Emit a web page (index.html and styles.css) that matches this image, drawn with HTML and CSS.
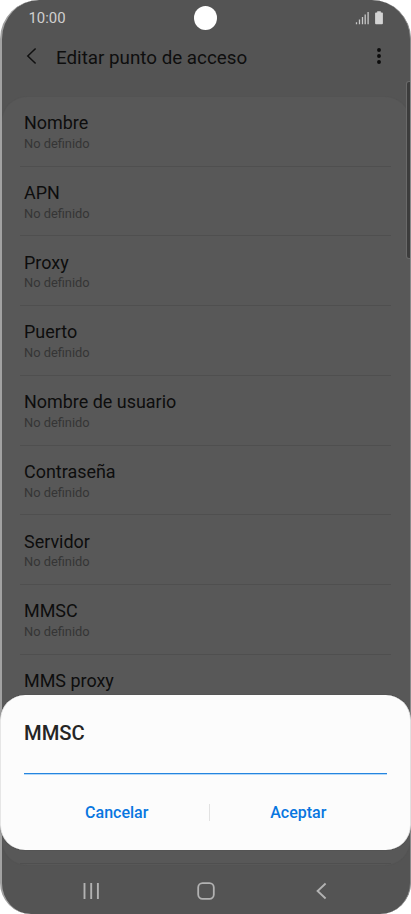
FILE: index.html
```html
<!DOCTYPE html>
<html lang="es">
<head>
<meta charset="utf-8">
<title>Editar punto de acceso</title>
<link rel="stylesheet" href="styles.css">
</head>
<body>
<main class="phone">
  <div class="status">
    <span class="clock">10:00</span>
    <svg class="status-icons" width="30" height="16" viewBox="0 0 30 16">
      <path d="M1.500 12.300v1.900M4.500 9.500v4.700M7.500 7v7.200M10.200 4.500v9.700M13.100 2v12.200" stroke="#c8c8c8" stroke-width="1.300"/>
      <path d="M22.200 1.200h3.600v1.200h1.200q.9 0 .9.900v10q0 .9-.9.900h-6q-.9 0-.9-.9V3.300q0-.9.9-.9h1.200z" fill="#d4d4d4"/>
    </svg>
    <span class="camera"></span>
  </div>
  <header class="header">
    <svg class="back" width="12" height="18" viewBox="0 0 12 18"><path d="M9.600 1.500 1.800 9l7.800 7.500" fill="none" stroke="#101010" stroke-width="1.500"/></svg>
    <h1 class="title">Editar punto de acceso</h1>
    <svg class="more" width="6" height="18" viewBox="0 0 6 18" fill="#0c0c0c"><circle cx="3" cy="3" r="1.950"/><circle cx="3" cy="9" r="1.950"/><circle cx="3" cy="15" r="1.950"/></svg>
  </header>
  <section class="list">
    <div class="row"><div class="name">Nombre</div><div class="value">No definido</div></div>
    <div class="row"><div class="name">APN</div><div class="value">No definido</div></div>
    <div class="row"><div class="name">Proxy</div><div class="value">No definido</div></div>
    <div class="row"><div class="name">Puerto</div><div class="value">No definido</div></div>
    <div class="row"><div class="name">Nombre de usuario</div><div class="value">No definido</div></div>
    <div class="row"><div class="name">Contraseña</div><div class="value">No definido</div></div>
    <div class="row"><div class="name">Servidor</div><div class="value">No definido</div></div>
    <div class="row"><div class="name">MMSC</div><div class="value">No definido</div></div>
    <div class="row"><div class="name">MMS proxy</div></div>
    <div class="row"></div>
    <div class="row"></div>
  </section>
  <nav class="nav">
    <svg width="18" height="18" viewBox="0 0 18 18"><path d="M2.500 1v16M9.200 1v16M15.900 1v16" stroke="#b2b2b2" stroke-width="1.900"/></svg>
    <svg width="18" height="18" viewBox="0 0 18 18"><rect x="1.200" y="1.200" width="15.600" height="15.600" rx="4.300" fill="none" stroke="#b2b2b2" stroke-width="1.800"/></svg>
    <svg width="18" height="18" viewBox="0 0 18 18"><path d="M13.600 1.500 5.600 9l8 7.500" fill="none" stroke="#b2b2b2" stroke-width="1.900"/></svg>
  </nav>
  <span class="scrollbar"></span>
</main>
<div class="dialog">
  <h2 class="dialog-title">MMSC</h2>
  <div class="field"></div>
  <div class="actions">
    <span class="action cancel">Cancelar</span>
    <span class="separator"></span>
    <span class="action">Aceptar</span>
  </div>
</div>
</body>
</html>
```
FILE: styles.css
```css
* { box-sizing: border-box; }
body {
  margin: 0;
  position: relative;
  width: 411px;
  height: 914px;
  overflow: hidden;
  background: #fff;
  font-family: Roboto, sans-serif;
}
svg { display: block; }
.phone {
  position: relative;
  display: flex;
  flex-direction: column;
  height: 914px;
  background: #545454;
  border-left: 2px solid #a2a2a2;
  border-right: 1px solid #8a8a8a;
  border-radius: 39px 39px 31px 31px;
  overflow: hidden;
}
.status {
  display: flex;
  justify-content: space-between;
  align-items: center;
  height: 36px;
  padding: 0 25px 0 26.500px;
}
.clock { font-size: 14.900px; color: #d0d0d0; }
.camera {
  position: absolute;
  left: 192px;
  top: 6px;
  width: 23px;
  height: 24px;
  border-radius: 50%;
  background: #fff;
}
.header {
  display: flex;
  align-items: center;
  height: 40px;
  margin-bottom: 21px;
  padding: 0 28px 0 24px;
}
.title {
  margin: 4px 0 0 18px;
  font-size: 18.800px;
  font-weight: 400;
  line-height: 24px;
  color: #0e0e0e;
}
.more { margin-left: auto; }
.list {
  height: 768px;
  border-radius: 25px;
  background: #585858;
  box-shadow: 0 0 0 1px #535353;
}
.row {
  height: 69.730px;
  margin: 0 19px 0 18px;
  padding: 14.300px 4px 0;
  border-bottom: 1px solid #4f4f4f;
}
.name { font-size: 17.950px; line-height: 24px; color: #0d0d0d; }
.value { margin-top: 0.700px; font-size: 12.850px; line-height: 16px; color: #353535; }
.nav {
  display: flex;
  justify-content: space-between;
  padding: 17px 80px 0;
}
.scrollbar {
  position: absolute;
  right: 0;
  top: 82px;
  width: 3px;
  height: 176px;
  border-radius: 2px 0 0 2px;
  background: #3c3c3c;
  box-shadow: 0 0 0 1px #696969;
}
.dialog {
  position: absolute;
  left: 0;
  top: 695px;
  width: 411px;
  height: 155px;
  padding: 25px 23px 0;
  border-left: 1px solid #e6e6e6;
  border-right: 1px solid #e0e0e0;
  border-radius: 25px;
  background: #fcfcfc;
  box-shadow: 0 0 1px #333;
}
.dialog-title {
  margin: 0;
  font-size: 20.200px;
  font-weight: 500;
  line-height: 27px;
  color: #252525;
}
.field {
  height: 27px;
  border-bottom: 1px solid #2585df;
  box-shadow: 0 1px #b4d8f8;
}
.actions {
  display: flex;
  align-items: center;
  height: 76px;
}
.action {
  flex: 1;
  text-align: center;
  font-size: 16px;
  font-weight: 500;
  color: #0876e0;
}
.cancel { padding-left: 4px; }
.separator { width: 1px; height: 17px; background: #e2e2e2; margin-left: 3px; }
```
